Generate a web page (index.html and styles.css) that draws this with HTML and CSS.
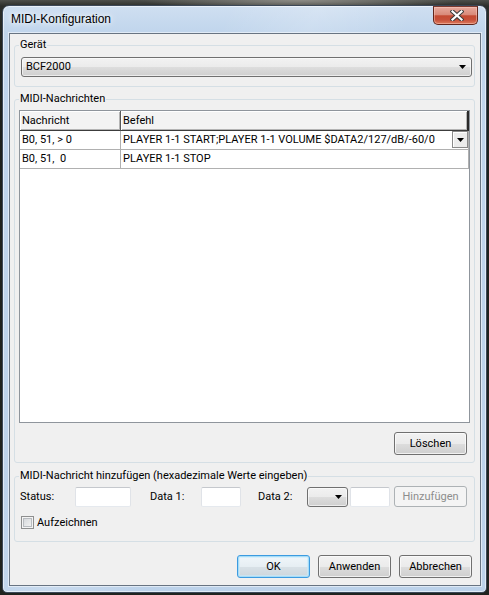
FILE: index.html
```html
<!DOCTYPE html>
<html lang="de">
<head>
<meta charset="utf-8">
<title>MIDI-Konfiguration</title>
<link rel="stylesheet" href="styles.css">
</head>
<body>
<div class="window">
  <div class="titlebar">
    <span class="title">MIDI-Konfiguration</span>
    <div class="close">
      <svg width="14" height="11" viewBox="0 0 14 11">
        <path d="M2.5 1.5 L11.5 9.5 M11.5 1.5 L2.5 9.5" stroke="#3b3b3b" stroke-width="4.2" stroke-linecap="square" fill="none"/>
        <path d="M2.5 1.5 L11.5 9.5 M11.5 1.5 L2.5 9.5" stroke="#ffffff" stroke-width="2.2" stroke-linecap="square" fill="none"/>
      </svg>
    </div>
  </div>
  <div class="client">
    <fieldset class="group g-device">
      <legend>Gerät</legend>
      <div class="combo combo-wide">
        <span class="combo-text">BCF2000</span>
        <svg class="arrow" width="7" height="4" viewBox="0 0 7 4"><path d="M0 0 H7 L3.5 4 Z" fill="#000"/></svg>
      </div>
    </fieldset>

    <fieldset class="group g-msgs">
      <legend>MIDI-Nachrichten</legend>
      <div class="listview">
        <div class="lv-header">
          <div class="hcol c1">Nachricht</div>
          <div class="hcol c2">Befehl</div>
        </div>
        <div class="lv-row">
          <div class="cell c1">B0, 51, &gt; 0</div>
          <div class="cell c2">
            <span>PLAYER 1-1 START;PLAYER 1-1 VOLUME $DATA2/127/dB/-60/0</span>
            <span class="cell-drop"><svg width="7" height="4" viewBox="0 0 7 4"><path d="M0 0 H7 L3.5 4 Z" fill="#000"/></svg></span>
          </div>
        </div>
        <div class="lv-row">
          <div class="cell c1">B0, 51,  0</div>
          <div class="cell c2"><span>PLAYER 1-1 STOP</span></div>
        </div>
      </div>
      <div class="row-end">
        <button class="btn">Löschen</button>
      </div>
    </fieldset>

    <fieldset class="group g-add">
      <legend>MIDI-Nachricht hinzufügen (hexadezimale Werte eingeben)</legend>
      <div class="add-row">
        <span class="lbl lbl-status">Status:</span>
        <span class="input in-status"></span>
        <span class="lbl lbl-d1">Data 1:</span>
        <span class="input in-d1"></span>
        <span class="lbl lbl-d2">Data 2:</span>
        <div class="combo combo-small">
          <svg class="arrow" width="7" height="4" viewBox="0 0 7 4"><path d="M0 0 H7 L3.5 4 Z" fill="#000"/></svg>
        </div>
        <span class="input in-d2"></span>
        <button class="btn btn-disabled btn-add">Hinzufügen</button>
      </div>
      <div class="check-row">
        <span class="checkbox"></span>
        <span class="check-label">Aufzeichnen</span>
      </div>
    </fieldset>

    <div class="buttons">
      <button class="btn btn-default">OK</button>
      <button class="btn">Anwenden</button>
      <button class="btn">Abbrechen</button>
    </div>
  </div>
</div>
</body>
</html>
```

FILE: styles.css
```css
* { box-sizing: border-box; }
html, body { margin: 0; padding: 0; }
body {
  width: 489px;
  height: 595px;
  overflow: hidden;
  padding: 5px 0 0 2px;
  background:
    radial-gradient(ellipse 160px 10px at 300px 0px, #8d8c86 0%, rgba(141,140,134,0) 100%),
    linear-gradient(180deg, #4d4f4b 0px, #2c2e2b 6px, #1d201c 60px, #20231f 100%);
  font-family: Roboto, "Liberation Sans", sans-serif;
  font-size: 11px;
  color: #000;
}

/* window frame */
.window {
  width: 485px;
  height: 588px;
  border: 1px solid #3b4858;
  border-radius: 7px 7px 5px 5px;
  background:
    linear-gradient(115deg, rgba(255,255,255,0) 30%, rgba(255,255,255,0.18) 42%, rgba(255,255,255,0) 55%),
    linear-gradient(180deg, #cfdff1 0px, #c0d5ec 27px, #bcd2ea 100%);
  box-shadow: inset 0 0 0 1px rgba(255,255,255,0.55);
  padding: 0 5px 6px 6px;
  display: flex;
  flex-direction: column;
}
.titlebar {
  height: 27px;
  flex: none;
  display: flex;
  justify-content: space-between;
  align-items: flex-start;
}
.title {
  margin: 6px 0 0 2px;
  font-family: "Liberation Sans", Roboto, sans-serif;
  font-size: 12px;
  line-height: 15px;
  color: #000;
  text-shadow: 0 0 5px #fff, 0 0 9px rgba(255,255,255,0.9);
}
.close {
  width: 45px;
  height: 19px;
  margin-right: 3px;
  border: 1px solid #62261c;
  border-top-color: #7a3a30;
  border-radius: 0 0 5px 5px;
  background: linear-gradient(180deg, #e7a99c 0%, #d98a7a 45%, #c44a32 52%, #c6503a 75%, #dd7a5c 100%);
  box-shadow: inset 0 0 0 1px rgba(255,210,200,0.45);
  display: flex;
  align-items: center;
  justify-content: center;
}
.close svg { display: block; margin-left: 3px; }

/* client */
.client {
  flex: 1;
  background: #f0f0f0;
  border: 1px solid #687482;
  box-shadow: 0 0 0 1px rgba(255,255,255,0.5);
  display: flex;
  flex-direction: column;
}

.group {
  margin: 0 5px 0 4px;
  padding: 0;
  border: 1px solid #d5dfe5;
  border-radius: 3px;
  min-width: 0;
}
.group legend {
  margin-left: 4px;
  padding: 0 1px;
  font-size: 11px;
  line-height: 14px;
}
.g-device { margin-top: 4px; padding-bottom: 9px; }
.g-msgs { margin-top: 5px; padding-bottom: 7px; }
.g-add { margin-top: 6px; padding-bottom: 12px; }

/* combo boxes */
.combo {
  height: 20px;
  border: 1px solid #707070;
  border-radius: 3px;
  background: linear-gradient(180deg, #f2f2f2 0%, #ebebeb 50%, #dddddd 51%, #cfcfcf 100%);
  box-shadow: inset 0 0 0 1px rgba(255,255,255,0.6);
  display: flex;
  align-items: center;
  padding: 0 5px 0 4px;
}
.combo-text { flex: 1; line-height: 14px; }
.combo .arrow { display: block; margin-left: auto; }
.combo-wide { margin: 5px 2px 0 6px; }
.combo-small { width: 41px; flex: none; }

/* list view */
.listview {
  margin: 4px 4px 0 4px;
  height: 313px;
  background: #fff;
  border: 1px solid #8f959c;
}
.lv-header { display: flex; height: 20px; }
.hcol {
  height: 20px;
  padding-left: 2px;
  line-height: 19px;
  background: #f3f3f3;
  border-right: 1px solid #5a5a5a;
  border-bottom: 1px solid #3c3c3c;
  box-shadow: inset 1px 1px 0 #fff, inset -1px -1px 0 #b4b4b4;
}
.hcol.c1 { width: 101px; }
.hcol.c2 { flex: 1; border-right: 2px solid #2a2a2a; }
.lv-row { display: flex; height: 19px; }
.cell {
  height: 19px;
  padding-left: 2px;
  line-height: 18px;
  white-space: pre;
  border-right: 1px solid #b0b0b0;
  border-bottom: 1px solid #b0b0b0;
}
.cell.c1 { width: 101px; }
.cell.c2 { flex: 1; display: flex; align-items: flex-start; }
.cell-drop {
  margin-left: auto;
  margin-top: 0;
  width: 16px;
  height: 17px;
  border: 1px solid #8a8a8a;
  background: #ececec;
  box-shadow: inset 1px 1px 0 #fff;
  display: flex;
  align-items: center;
  justify-content: center;
}
.cell-drop svg { display: block; }

.row-end {
  display: flex;
  justify-content: flex-end;
  margin: 9px 7px 0 0;
}

/* buttons */
.btn {
  appearance: none;
  width: 73px;
  height: 23px;
  padding: 0;
  margin: 0;
  font-family: inherit;
  font-size: 11px;
  color: #000;
  border: 1px solid #707070;
  border-radius: 3px;
  background: linear-gradient(180deg, #f2f2f2 0%, #ebebeb 50%, #dddddd 51%, #cfcfcf 100%);
  box-shadow: inset 0 0 0 1px rgba(252,252,252,0.75);
}
.btn-default {
  border-color: #3c9be0;
  box-shadow: inset 0 0 0 1px #a6dcf7, inset 0 0 0 2px rgba(200,235,252,0.6);
  background: linear-gradient(180deg, #f0f6fa 0%, #e6eef3 50%, #d8e1e7 51%, #cdd6dc 100%);
}
.btn-disabled {
  color: #8d8d8d;
  border-color: #adb2b5;
  background: #f4f4f4;
  box-shadow: none;
}

/* add row */
.add-row {
  display: flex;
  align-items: center;
  height: 21px;
  margin: 3px 0 0 5px;
}
.lbl { flex: none; line-height: 14px; }
.lbl-status { width: 55px; }
.lbl-d1 { width: 51px; margin-left: 19px; }
.lbl-d2 { width: 49px; margin-left: 17px; }
.input {
  flex: none;
  height: 20px;
  background: #fff;
  border: 1px solid;
  border-color: #c5c8cd #e0e3e8 #e5e9ee #e0e3e8;
  border-radius: 2px;
}
.in-status { width: 56px; }
.in-d1 { width: 40px; }
.in-d2 { width: 40px; margin-left: 2px; }
.btn-add { height: 21px; margin-left: 4px; flex: none; }

.check-row {
  display: flex;
  align-items: center;
  height: 13px;
  margin: 9px 0 0 6px;
}
.checkbox {
  width: 13px;
  height: 13px;
  border: 1px solid #8e8f8f;
  background: linear-gradient(135deg, #cfd2d6 0%, #eceded 70%, #f7f7f7 100%);
  box-shadow: inset 0 0 0 1px #f4f4f4, inset 0 0 0 2px #b8bcc0;
}
.check-label { margin-left: 3px; line-height: 14px; }

.buttons {
  display: flex;
  justify-content: flex-end;
  gap: 8px;
  margin-top: 13px;
  padding-right: 8px;
}
```
